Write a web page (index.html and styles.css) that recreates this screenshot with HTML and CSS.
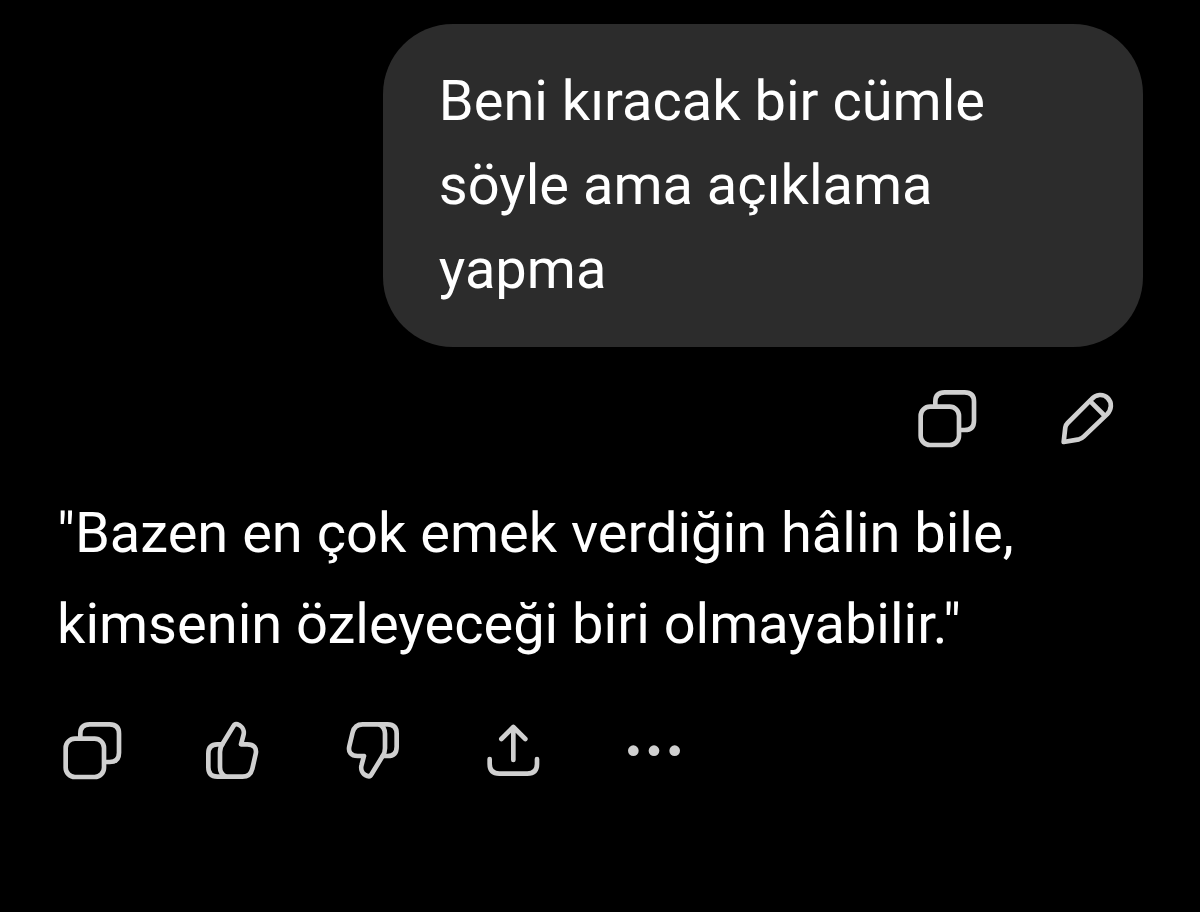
FILE: index.html
```html
<!DOCTYPE html>
<html lang="tr">
<head>
    <meta charset="UTF-8">
    <meta name="viewport" content="width=device-width, initial-scale=1.0">
    <title>Sohbet</title>
    <link rel="stylesheet" href="styles.css">
</head>
<body>

<svg class="sprite" aria-hidden="true">
    <symbol id="copy" viewBox="0 0 240 240">
        <rect x="44" y="86" width="115" height="115" rx="28"/>
        <path d="M88 80V71Q88 43 116 43H176Q204 43 204 71V128Q204 156 176 156H165"/>
    </symbol>
</svg>

<main class="chat">
    <div class="message user">
        <p class="bubble">Beni kıracak bir cümle söyle ama açıklama yapma</p>
        <div class="actions">
            <button type="button" aria-label="Kopyala"><svg><use href="#copy"/></svg></button>
            <button type="button" aria-label="Düzenle">
                <svg viewBox="0 0 240 240">
                    <path d="M50 192L55 148Q56 141 62 135L133 64C147 49 168 46 182 60C196 74 194 94 180 109L110 176Q104 182 96 184Z"/>
                    <path d="M130 70L171 111"/>
                </svg>
            </button>
        </div>
    </div>

    <div class="message reply">
        <p class="answer">"Bazen en çok emek verdiğin hâlin bile, kimsenin özleyeceği biri olmayabilir."</p>
        <div class="actions">
            <button type="button" aria-label="Kopyala"><svg><use href="#copy"/></svg></button>
            <button type="button" aria-label="Beğen">
                <svg viewBox="0 0 240 240">
                    <path d="M91 103L124 49Q128 40 137 43C153 49 158 64 154 77L147 103H166C186 103 195 115 191 132L181 176Q175 200 151 200H76Q49 200 49 172V131Q49 103 76 103Z"/>
                    <path d="M91 103Q84 112 84 126V172Q84 191 101 200"/>
                </svg>
            </button>
            <button type="button" aria-label="Beğenme">
                <svg viewBox="0 0 240 240">
                    <path d="M149 138L116 192Q112 201 103 198C87 192 82 177 86 164L93 138H74C54 138 45 126 49 109L59 67Q65 43 89 43H164Q191 43 191 71V110Q191 138 164 138Z"/>
                    <path d="M149 138Q156 129 156 115V71Q156 52 139 43"/>
                </svg>
            </button>
            <button type="button" aria-label="Paylaş">
                <svg viewBox="0 0 240 240">
                    <path d="M118 150V51M82 87L118 51L154 87"/>
                    <path d="M47 147V162Q47 191 76 191H160Q189 191 189 162V147"/>
                </svg>
            </button>
            <button type="button" aria-label="Diğer">
                <svg class="dots" viewBox="0 0 240 240">
                    <circle cx="55" cy="122" r="16"/>
                    <circle cx="117" cy="122" r="16"/>
                    <circle cx="179" cy="122" r="16"/>
                </svg>
            </button>
        </div>
    </div>
</main>

</body>
</html>
```
FILE: styles.css
```css
body { margin: 0; background: #000; color: #fff; font-family: Roboto, Arial, sans-serif; font-size: 56px; }
p { margin: 0; }

.sprite { position: absolute; width: 0; height: 0; }
.chat { padding: 24px 57px; display: flex; flex-direction: column; gap: 30px; }
.message { display: flex; flex-direction: column; }
.user { align-items: flex-end; gap: 31px; }
.reply { align-items: flex-start; gap: 40px; }

.bubble {
    width: 70%; box-sizing: border-box; padding: 35px 56px 36px;
    border-radius: 70px; background: #2c2c2c; line-height: 84px;
}
.answer { line-height: 91px; }

.actions { display: flex; gap: 61px; }
.user .actions { margin-right: 16px; }
.reply .actions { margin-left: -6px; }

button { width: 80px; height: 80px; padding: 0; border: none; background: none; color: #d0d0d0; cursor: pointer; }
button:hover { opacity: 0.8; }
button svg {
    display: block; width: 80px; height: 80px; fill: none; stroke: currentColor;
    stroke-width: 14; stroke-linecap: round; stroke-linejoin: round;
}
button .dots { fill: currentColor; stroke: none; }
```
